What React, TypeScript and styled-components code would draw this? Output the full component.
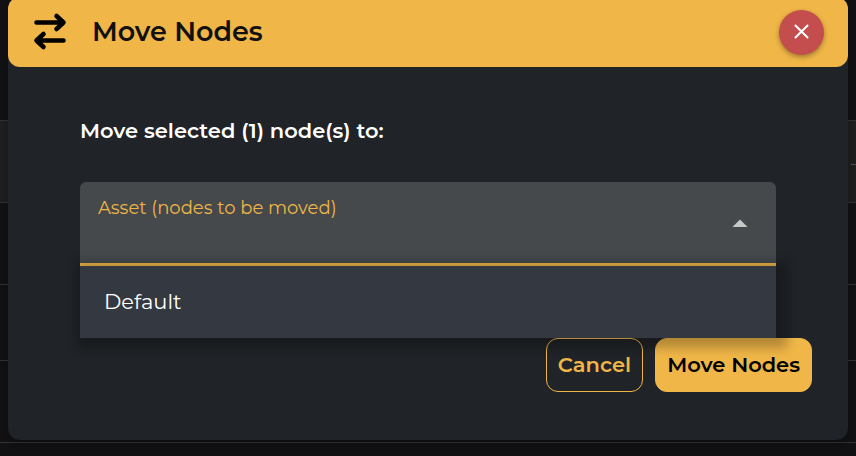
import React, { useState } from "react";
import styled, { createGlobalStyle } from "styled-components";

const gold = "#f0b647";

const GlobalStyle = createGlobalStyle`
  *, *::before, *::after { box-sizing: border-box; }
  body {
    margin: 0;
    background: #121214;
    color: #fff;
    font-family: Montserrat, Inter, sans-serif;
  }
  button, select { font: inherit; }
`;

const Page = styled.div`
  display: grid;
  min-height: 100vh;
  max-height: 100vh;
  overflow: hidden;
`;

const Backdrop = styled.div`
  grid-area: 1 / 1;
  display: flex;
  flex-direction: column;
`;

const BackdropRow = styled.div<{ $height: number; $active?: boolean }>`
  display: flex;
  align-items: center;
  justify-content: flex-end;
  flex: none;
  height: ${(p) => p.$height}px;
  border-bottom: 1px solid #343436;
  background: ${(p) => (p.$active ? "#202020" : "transparent")};
  color: #bbb;
  font-size: 8px;
  line-height: 12px;
`;

const Dialog = styled.section`
  grid-area: 1 / 1;
  align-self: start;
  z-index: 1;
  margin: -3px 8px 0;
  border-radius: 12px;
  background: #202327;
  box-shadow: 0 4px 16px 2px rgba(0, 0, 0, 0.25);
`;

const Header = styled.header`
  display: flex;
  align-items: center;
  height: 70px;
  padding: 0 24px;
  border-radius: 12px;
  background: ${gold};
  color: #111;
`;

const SwapIcon = styled.svg`
  width: 36px;
  height: 40px;
  margin-right: 24px;
  fill: none;
  stroke: #000;
  stroke-width: 4.6;
  stroke-linecap: round;
  stroke-linejoin: round;
`;

const Title = styled.h1`
  margin: 0;
  flex: 1;
  font-size: 27px;
  font-weight: 600;
  line-height: 32px;
`;

const CloseButton = styled.button`
  display: grid;
  place-items: center;
  width: 45px;
  height: 45px;
  padding: 0 0 2px;
  border: 0;
  border-radius: 50%;
  background: #c44d4d;
  box-shadow: 0 2px 5px rgba(0, 0, 0, 0.35);
  cursor: pointer;

  svg {
    width: 15px;
    height: 15px;
    stroke: #fff;
    stroke-width: 2.2;
  }
`;

const Body = styled.div`
  padding: 50px 36px 48px 72px;
`;

const Prompt = styled.h2`
  margin: 0 0 37px;
  font-size: 21px;
  font-weight: 600;
  line-height: 28px;
`;

const Field = styled.div`
  position: relative;
  margin: 0 36px 72px 0;
`;

const FieldLabel = styled.label`
  position: absolute;
  top: 14px;
  left: 18px;
  color: ${gold};
  font-size: 18px;
  font-weight: 400;
  line-height: 24px;
  pointer-events: none;
`;

const FieldSelect = styled.select`
  display: block;
  width: 100%;
  height: 84px;
  padding: 36px 48px 8px 18px;
  border: 0;
  border-bottom: 3px solid ${gold};
  border-radius: 6px 6px 0 0;
  outline: 0;
  appearance: none;
  background: #45494b;
  color: #fff;
  font-size: 21px;
`;

const Caret = styled.svg`
  position: absolute;
  top: 37px;
  right: 28px;
  width: 16px;
  height: 8px;
  fill: #c7c8c8;
  pointer-events: none;
`;

const Options = styled.ul`
  position: absolute;
  top: 100%;
  left: 0;
  right: 0;
  z-index: 2;
  margin: 0;
  padding: 0;
  background: #343840;
  box-shadow: 4px 3px 10px 7px rgba(0, 0, 0, 0.25);
  list-style: none;
`;

const Option = styled.li`
  display: flex;
  align-items: center;
  height: 72px;
  padding: 0 24px;
  font-size: 21px;
  font-weight: 400;
  line-height: 28px;
  cursor: pointer;
`;

const Actions = styled.div`
  display: flex;
  justify-content: flex-end;
  gap: 12px;
`;

const ActionButton = styled.button<{ $primary?: boolean }>`
  height: 54px;
  padding: 0 11px;
  border: 1px solid ${gold};
  border-radius: 12px;
  background: ${(p) => (p.$primary ? gold : "transparent")};
  color: ${(p) => (p.$primary ? "#000" : gold)};
  font-size: 21px;
  font-weight: 600;
  line-height: 28px;
  white-space: nowrap;
  cursor: pointer;
`;

export default function App() {
  const [open, setOpen] = useState(true);
  const [asset, setAsset] = useState("");

  const choose = (value: string) => {
    setAsset(value);
    setOpen(false);
  };

  return (
    <>
      <GlobalStyle />
      <Page>
        <Backdrop aria-hidden="true">
          <BackdropRow $height={121} />
          <BackdropRow $height={82} $active>…</BackdropRow>
          <BackdropRow $height={82} />
          <BackdropRow $height={76} />
          <BackdropRow $height={82} />
        </Backdrop>
        <Dialog role="dialog" aria-labelledby="dialog-title">
          <Header>
            <SwapIcon viewBox="0 0 36 40" aria-hidden="true">
              <path d="M4.500 10.500H31M24.500 4l7 6.500-7 6.500M31.500 28.500H5M11.500 22l-7 6.500 7 6.500" />
            </SwapIcon>
            <Title id="dialog-title">Move Nodes</Title>
            <CloseButton type="button" aria-label="Close">
              <svg viewBox="0 0 16 16" aria-hidden="true">
                <path d="M1 1l14 14M15 1L1 15" />
              </svg>
            </CloseButton>
          </Header>
          <Body>
            <Prompt>Move selected (1) node(s) to:</Prompt>
            <Field>
              <FieldSelect
                id="asset"
                value={asset}
                onChange={(e) => choose(e.target.value)}
                onMouseDown={(e) => {
                  e.preventDefault();
                  setOpen(!open);
                }}
              >
                <option value="" />
                <option value="default">Default</option>
              </FieldSelect>
              <FieldLabel htmlFor="asset">Asset (nodes to be moved)</FieldLabel>
              <Caret viewBox="0 0 16 8" aria-hidden="true">
                <path d={open ? "M0.500 8L8 0.500 15.500 8z" : "M0.500 0L8 7.500 15.500 0z"} />
              </Caret>
              {open && (
                <Options role="listbox" aria-label="Asset">
                  <Option
                    role="option"
                    aria-selected={asset === "default"}
                    onClick={() => choose("default")}
                  >
                    Default
                  </Option>
                </Options>
              )}
            </Field>
            <Actions>
              <ActionButton type="button">Cancel</ActionButton>
              <ActionButton type="button" $primary>Move Nodes</ActionButton>
            </Actions>
          </Body>
        </Dialog>
      </Page>
    </>
  );
}
